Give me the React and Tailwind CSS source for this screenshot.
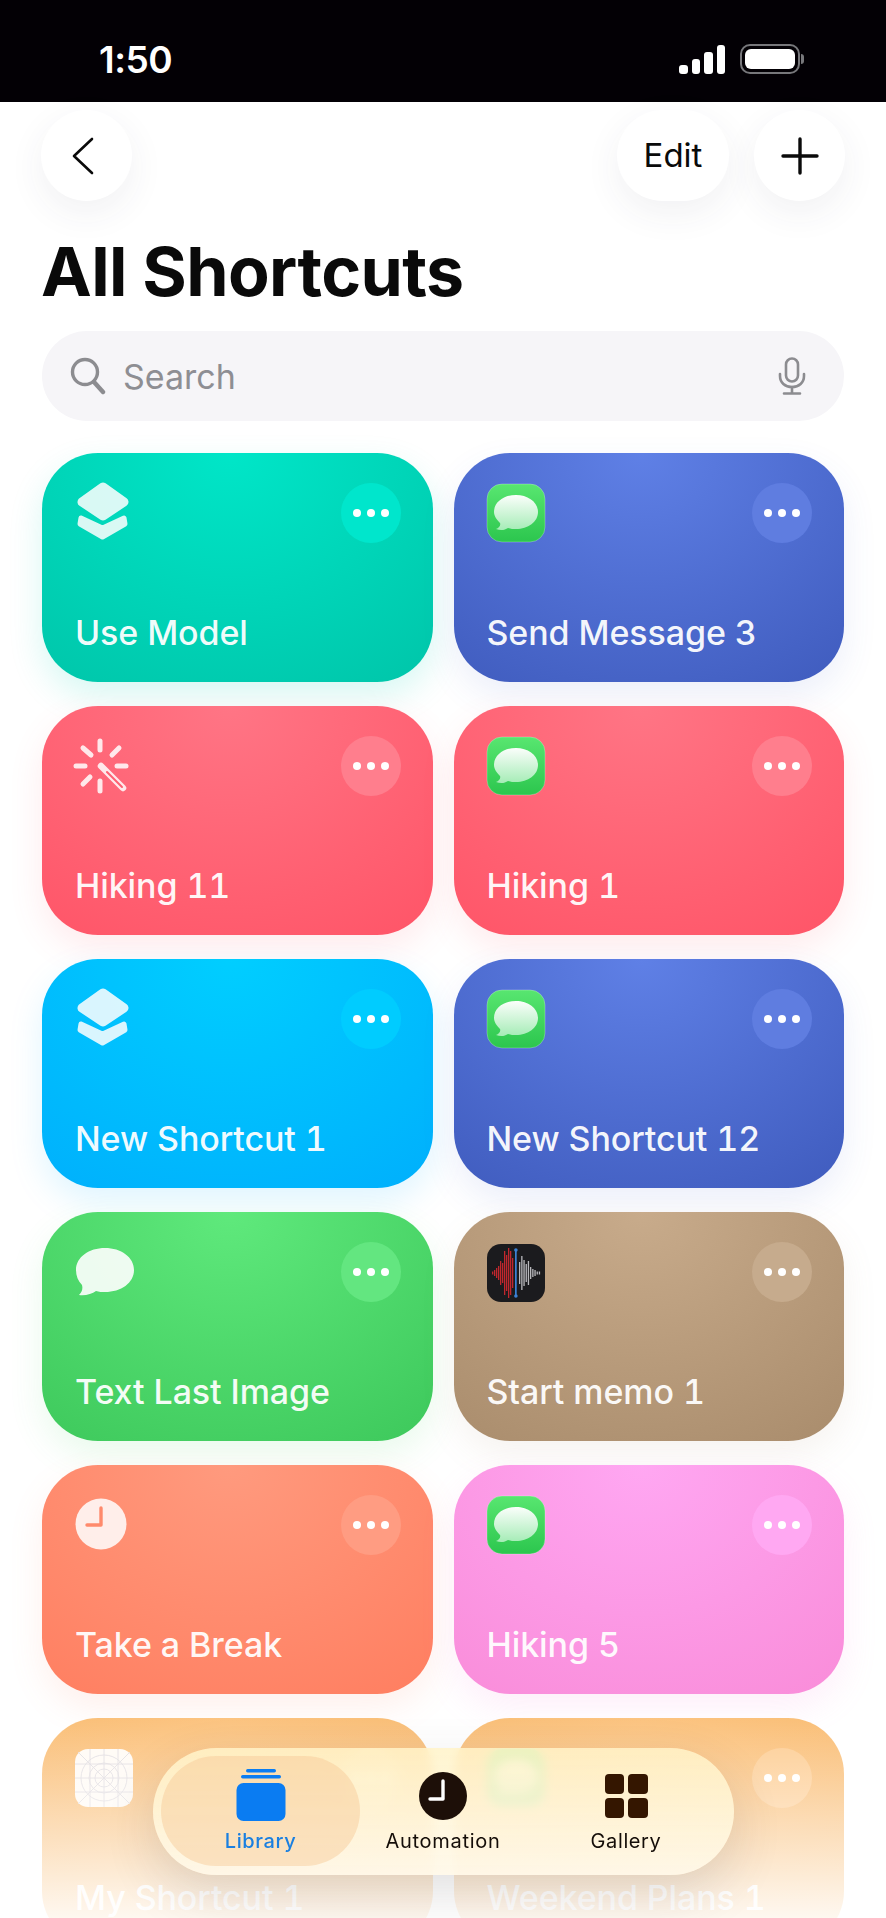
import { useId } from 'react';

const CARDS = [
  { title: 'Use Model', icon: 'layers', bg: 'bg-[radial-gradient(ellipse_90%_130%_at_48%_0%,#00e6c8_0%,#00c4a8_100%)]', glow: 'shadow-[0_14px_34px_rgba(0,210,180,0.16)]', btn: 'bg-[#00e6cc]' },
  { title: 'Send Message 3', icon: 'messages', bg: 'bg-[radial-gradient(ellipse_90%_130%_at_48%_0%,#5f80e6_0%,#3e5abc_100%)]', glow: 'shadow-[0_14px_34px_rgba(70,100,210,0.10)]', btn: 'bg-[#5f7de0]' },
  { title: 'Hiking 11', icon: 'wand', bg: 'bg-[radial-gradient(ellipse_90%_130%_at_48%_0%,#ff7585_0%,#ff5366_100%)]', glow: 'shadow-[0_14px_34px_rgba(255,90,110,0.12)]', btn: 'bg-[#ff7e8d]' },
  { title: 'Hiking 1', icon: 'messages', bg: 'bg-[radial-gradient(ellipse_90%_130%_at_48%_0%,#ff7585_0%,#ff5366_100%)]', glow: 'shadow-[0_14px_34px_rgba(255,90,110,0.12)]', btn: 'bg-[#ff7e8d]' },
  { title: 'New Shortcut 1', icon: 'layers', bg: 'bg-[radial-gradient(ellipse_90%_130%_at_48%_0%,#00ceff_0%,#00aefc_100%)]', glow: 'shadow-[0_14px_34px_rgba(0,180,255,0.13)]', btn: 'bg-[#00ccff]' },
  { title: 'New Shortcut 12', icon: 'messages', bg: 'bg-[radial-gradient(ellipse_90%_130%_at_48%_0%,#5f80e6_0%,#3e5abc_100%)]', glow: 'shadow-[0_14px_34px_rgba(70,100,210,0.10)]', btn: 'bg-[#5f7de0]' },
  { title: 'Text Last Image', icon: 'bubble', bg: 'bg-[radial-gradient(ellipse_90%_130%_at_48%_0%,#5fe97c_0%,#3cc75a_100%)]', glow: 'shadow-[0_14px_34px_rgba(70,210,100,0.12)]', btn: 'bg-[#63e680]' },
  { title: 'Start memo 1', icon: 'memo', bg: 'bg-[radial-gradient(ellipse_90%_130%_at_48%_0%,#c8ab8b_0%,#a88b6b_100%)]', glow: 'shadow-[0_14px_34px_rgba(170,140,110,0.10)]', btn: 'bg-[#c6ab8d]' },
  { title: 'Take a Break', icon: 'clock', bg: 'bg-[radial-gradient(ellipse_90%_130%_at_48%_0%,#ff9a7e_0%,#ff7d5f_100%)]', glow: 'shadow-[0_14px_34px_rgba(255,130,100,0.12)]', btn: 'bg-[#ff9c82]' },
  { title: 'Hiking 5', icon: 'messages', bg: 'bg-[radial-gradient(ellipse_90%_130%_at_48%_0%,#ffa7f2_0%,#f98bd8_100%)]', glow: 'shadow-[0_14px_34px_rgba(250,140,220,0.14)]', btn: 'bg-[#ffa8f2]' },
  { title: 'My Shortcut 1', icon: 'blueprint', bg: 'bg-[radial-gradient(ellipse_90%_130%_at_48%_0%,#fcc078_0%,#f7b565_100%)]', glow: '', btn: 'bg-[#fdc98b]' },
  { title: 'Weekend Plans 1', icon: 'messages', bg: 'bg-[radial-gradient(ellipse_90%_130%_at_48%_0%,#fcc078_0%,#f7b565_100%)]', glow: '', btn: 'bg-[#fdc98b]' },
];

const RED_BARS = [3, 6, 10, 14, 24, 20, 44, 36, 50, 44, 30];
const GREY_BARS = [22, 34, 26, 18, 24, 12, 8, 6, 3, 3];

function LayersIcon() {
  return (
    <svg width="56" height="62" viewBox="0 0 56 62" className="-mt-[3px] text-white opacity-85">
      <path d="M28 7 L49 22 L28 36 L7 22 Z" fill="currentColor" stroke="currentColor" strokeWidth="9" strokeLinejoin="round" />
      <path d="M6 38 L27.5 48 L49 38 L50 44 L27.5 57 L5 44 Z" fill="currentColor" stroke="currentColor" strokeWidth="5" strokeLinejoin="round" />
    </svg>
  );
}

function MessagesIcon() {
  const id = useId();
  return (
    <svg width="60" height="60" viewBox="0 0 60 60" className="-ml-[1px]">
      <defs>
        <linearGradient id={`${id}a`} x1="0" y1="0" x2="0" y2="1">
          <stop offset="0" stopColor="#58e670" />
          <stop offset="1" stopColor="#2cc64e" />
        </linearGradient>
        <linearGradient id={`${id}b`} x1="0" y1="0" x2="0" y2="1">
          <stop offset="0" stopColor="#fbfefb" />
          <stop offset="1" stopColor="#a5ecb6" />
        </linearGradient>
      </defs>
      <rect x="1" y="1" width="58" height="58" rx="15" fill={`url(#${id}a)`} stroke="#ffffff" strokeOpacity="0.25" />
      <path d="M30 12 C42 12 52 19 52 29 C52 39 42 46 30 46 C27 46 25 46 22 45 C19 47 15 48 10 46 C13 45 15 42 14 40 C11 37 8 33 8 29 C8 19 18 12 30 12 Z" fill={`url(#${id}b)`} />
    </svg>
  );
}

function WandIcon() {
  return (
    <svg width="60" height="60" viewBox="0 0 60 60" className="-ml-[3px] text-white opacity-85" fill="none" stroke="currentColor" strokeLinecap="round">
      <g strokeWidth="5">
        <path d="M28 5 V14" />
        <path d="M28 45 V55" />
        <path d="M4 30 H13" />
        <path d="M45 30 H54" />
        <path d="M11 12 L19 19" />
        <path d="M47 12 L40 19" />
        <path d="M18 41 L11 48" />
      </g>
      <path d="M29 30 L51 52" strokeWidth="6.5" />
      <path d="M35 36 L50 51" strokeWidth="2" stroke="#ff5e70" />
    </svg>
  );
}

function BubbleIcon() {
  return (
    <svg width="60" height="50" viewBox="0 0 60 50" className="mt-[5px] text-white opacity-90">
      <path d="M30 1 C46 1 59 10 59 23 C59 36 46 45 30 45 C27 45 24 45 21 44 C17 47 10 49 4 48 C7 45 8 42 7 38 C3 34 1 29 1 23 C1 10 14 1 30 1 Z" fill="currentColor" />
    </svg>
  );
}

function MemoIcon() {
  return (
    <svg width="58" height="58" viewBox="0 0 58 58" className="mt-[2px]">
      <rect x="0" y="0" width="58" height="58" rx="14" fill="#1b1b1e" />
      {RED_BARS.map((h, i) => (
        <rect key={i} x={5 + i * 2} y={29 - h / 2} width="1.3" height={h} fill="#c1272d" />
      ))}
      <rect x="28" y="5" width="1.7" height="48" fill="#3b82d6" />
      <circle cx="28.9" cy="6" r="1.8" fill="#3b82d6" />
      <circle cx="28.9" cy="52" r="1.8" fill="#3b82d6" />
      {GREY_BARS.map((h, i) => (
        <rect key={i} x={32 + i * 2.2} y={29 - h / 2} width="1.3" height={h} fill="#b9b9bd" />
      ))}
    </svg>
  );
}

function ClockIcon() {
  return (
    <svg width="52" height="52" viewBox="0 0 52 52" className="mt-[3px]">
      <circle cx="26" cy="26" r="25.5" fill="#ffffff" fillOpacity="0.85" />
      <path d="M26 10 V27 H12" fill="none" stroke="#ff8a6c" strokeWidth="3.4" strokeLinecap="round" strokeLinejoin="round" />
    </svg>
  );
}

function BlueprintIcon() {
  return (
    <svg width="58" height="58" viewBox="0 0 58 58" className="mt-[1px]" fill="none" stroke="#dcd8dc" strokeWidth="0.9">
      <rect x="0" y="0" width="58" height="58" rx="13" fill="#ffffff" fillOpacity="0.92" stroke="none" />
      <circle cx="29" cy="29" r="23" />
      <circle cx="29" cy="29" r="15" />
      <circle cx="29" cy="29" r="9" />
      <path d="M3 3 L55 55 M55 3 L3 55 M29 0 V58 M0 29 H58 M15 0 V58 M43 0 V58 M0 15 H58 M0 43 H58" />
    </svg>
  );
}

function CardIcon({ name }) {
  if (name === 'layers') return <LayersIcon />;
  if (name === 'messages') return <MessagesIcon />;
  if (name === 'wand') return <WandIcon />;
  if (name === 'bubble') return <BubbleIcon />;
  if (name === 'memo') return <MemoIcon />;
  if (name === 'clock') return <ClockIcon />;
  return <BlueprintIcon />;
}

function ShortcutCard({ card }) {
  return (
    <div className={`h-[229px] rounded-[56px] pl-[33px] pr-[32px] pt-[30px] flex flex-col justify-between ${card.bg} ${card.glow}`}>
      <div className="flex items-start justify-between h-[62px]">
        <CardIcon name={card.icon} />
        <div className={`w-[60px] h-[60px] rounded-full flex items-center justify-center gap-[6px] ${card.btn}`}>
          <span className="w-2 h-2 rounded-full bg-white" />
          <span className="w-2 h-2 rounded-full bg-white" />
          <span className="w-2 h-2 rounded-full bg-white" />
        </div>
      </div>
      <div className="text-[34px] leading-[40px] font-medium text-white/95 mb-[29px] tracking-[-0.1px] tabular-nums whitespace-nowrap">{card.title}</div>
    </div>
  );
}

function StatusBar() {
  return (
    <div className="h-[102px] bg-[#030005] flex items-start justify-between pl-[99px] pr-[82px] pt-[38px]">
      <span className="text-[37px] leading-[44px] font-semibold text-white tracking-[-0.5px]">1:50</span>
      <div className="flex items-center gap-[15px] pt-[6px]">
        <div className="flex items-end gap-[4px] h-[29px]">
          <span className="w-[8.5px] h-[9px] rounded-[3px] bg-white" />
          <span className="w-[8.5px] h-[15px] rounded-[3px] bg-white" />
          <span className="w-[8.5px] h-[22px] rounded-[3px] bg-white" />
          <span className="w-[8.5px] h-[29px] rounded-[3px] bg-white" />
        </div>
        <div className="flex items-center gap-[1px]">
          <div className="w-[60px] h-[30px] rounded-[10px] border-2 border-[#77777b] p-[3px]">
            <div className="w-full h-full rounded-[6px] bg-white" />
          </div>
          <span className="w-[3px] h-[10px] rounded-r-full bg-[#77777b]" />
        </div>
      </div>
    </div>
  );
}

function TopBar() {
  return (
    <div className="flex items-center justify-between pl-[41px] pr-[41px] pt-2">
      <button className="w-[91px] h-[91px] rounded-full bg-white shadow-[0_12px_36px_rgba(60,50,90,0.07)] flex items-center justify-center pr-[7px]">
        <svg width="24" height="40" viewBox="0 0 24 40" fill="none" stroke="#0a0a0a" strokeWidth="2.6" strokeLinecap="round" strokeLinejoin="round">
          <path d="M21 3 L3 20 L21 37" />
        </svg>
      </button>
      <div className="flex items-center gap-[25px]">
        <button className="w-[112px] h-[91px] rounded-full bg-white shadow-[0_12px_36px_rgba(60,50,90,0.07)] text-[33px] text-[#0a0a0a]">Edit</button>
        <button className="w-[91px] h-[91px] rounded-full bg-white shadow-[0_12px_36px_rgba(60,50,90,0.07)] flex items-center justify-center">
          <svg width="40" height="40" viewBox="0 0 40 40" fill="none" stroke="#0a0a0a" strokeWidth="3.4" strokeLinecap="round">
            <path d="M20 3 V37 M3 20 H37" />
          </svg>
        </button>
      </div>
    </div>
  );
}

function SearchField() {
  return (
    <div className="mx-[42px] mt-[22px] h-[90px] rounded-full bg-[#f6f5f8] flex items-center justify-between pl-[28px] pr-[38px]">
      <div className="flex items-center gap-[17px]">
        <svg width="36" height="38" viewBox="0 0 36 38" fill="none" stroke="#8c8c90" strokeWidth="3.4" strokeLinecap="round">
          <circle cx="15" cy="15" r="12.5" />
          <path d="M24 25 L33 35" strokeWidth="4.4" />
        </svg>
        <span className="text-[34px] text-[#8e8e93]">Search</span>
      </div>
      <svg width="28" height="38" viewBox="0 0 28 38" fill="none" stroke="#8c8c90" strokeWidth="2.6" strokeLinecap="round">
        <rect x="8" y="1.5" width="12" height="23" rx="6" />
        <path d="M2 17 V19 C2 25.5 7 30 14 30 C21 30 26 25.5 26 19 V17" />
        <path d="M14 30 V36 M6 36.5 H22" />
      </svg>
    </div>
  );
}

function TabBar() {
  return (
    <div className="absolute left-[153px] top-[1748px] w-[581px] h-[127px] rounded-[64px] bg-gradient-to-b from-[#fff3c8]/85 to-[#fff8e8]/90 backdrop-blur-[5px] shadow-[0_18px_50px_rgba(70,60,60,0.16)] p-2 flex items-stretch">
      <div className="w-[199px] h-[110px] rounded-[55px] bg-[#f7c795]/45 flex flex-col items-center pt-[12px]">
        <svg width="50" height="54" viewBox="0 0 50 54" fill="#0a7cf2">
          <rect x="10" y="1" width="30" height="3.4" rx="1.7" />
          <rect x="5" y="7" width="40" height="3.4" rx="1.7" />
          <rect x="0.5" y="15" width="49" height="38" rx="7" />
        </svg>
        <span className="mt-[7px] text-[20px] leading-[24px] font-medium text-[#1a7fe0] tracking-[0.6px]">Library</span>
      </div>
      <div className="w-[166px] flex flex-col items-center pt-[16px]">
        <svg width="48" height="48" viewBox="0 0 48 48">
          <circle cx="24" cy="24" r="24" fill="#1d0f08" />
          <path d="M24 9 V27 H11" fill="none" stroke="#ffffff" strokeWidth="3.4" strokeLinecap="round" strokeLinejoin="round" />
        </svg>
        <span className="mt-[9px] text-[20px] leading-[24px] font-normal text-[#140d08] tracking-[0.7px]">Automation</span>
      </div>
      <div className="w-[200px] flex flex-col items-center pt-[18px]">
        <div className="grid grid-cols-2 gap-[4px] w-[43px]">
          <span className="h-[20px] rounded-[4px] bg-[#341600]" />
          <span className="h-[20px] rounded-[4px] bg-[#341600]" />
          <span className="h-[20px] rounded-[4px] bg-[#341600]" />
          <span className="h-[20px] rounded-[4px] bg-[#341600]" />
        </div>
        <span className="mt-[11px] text-[20px] leading-[24px] font-normal text-[#140d08] tracking-[0.6px]">Gallery</span>
      </div>
    </div>
  );
}

export default function App() {
  return (
    <div className="relative w-[886px] h-[1918px] overflow-hidden bg-white font-['Inter','Noto_Sans',sans-serif]">
      <StatusBar />
      <TopBar />
      <h1 className="pl-[41px] mt-[32px] text-[68px] leading-[76px] font-bold text-[#0a0a0a] tracking-[-0.6px]">All Shortcuts</h1>
      <SearchField />
      <div className="mx-[42px] mt-[32px] grid grid-cols-2 gap-x-[21px] gap-y-[24px]">
        {CARDS.map(card => (
          <ShortcutCard key={card.title} card={card} />
        ))}
      </div>
      <div className="absolute left-0 right-0 bottom-0 h-[215px] bg-gradient-to-b from-white/0 to-white/90" />
      <TabBar />
    </div>
  );
}
